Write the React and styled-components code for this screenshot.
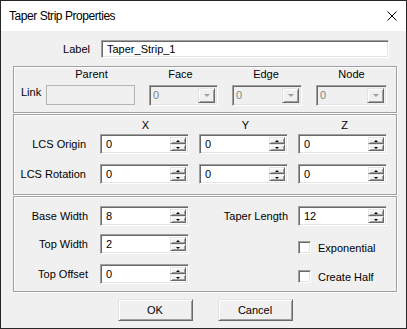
import React from 'react';
import styled, { createGlobalStyle } from 'styled-components';

const GlobalStyle = createGlobalStyle`
  html, body {
    margin: 0;
    padding: 0;
    background: #ffffff;
  }
  body {
    font-family: 'Liberation Sans', Arial, sans-serif;
    font-size: 11px;
    color: #000;
  }
`;

const Window = styled.div`
  box-sizing: border-box;
  width: 407px;
  height: 329px;
  border: 1px solid #262626;
  background: #f0f0f0;
  display: flex;
  flex-direction: column;
`;

const TitleBar = styled.div`
  flex-shrink: 0;
  height: 30px;
  background: #ffffff;
  display: flex;
  align-items: center;
  justify-content: space-between;
  padding: 0 9px 0 8px;
`;

const Title = styled.span`
  font-size: 12px;
  line-height: 14px;
  letter-spacing: -0.45px;
  color: #000;
`;

const CloseIcon = styled.svg`
  display: block;
  margin-top: -1px;
`;

const Body = styled.div`
  flex: 1;
  display: flex;
  flex-direction: column;
  padding: 9px 9px 0 12px;
`;

const LabelRow = styled.div`
  display: flex;
  align-items: center;
  height: 18px;
`;

const Caption = styled.span`
  line-height: 13px;
  white-space: nowrap;
  text-align: ${p => p.$align || 'right'};
  padding-right: ${p => p.$pr || 0}px;
  padding-left: ${p => p.$pl || 0}px;
  width: ${p => (p.$w ? `${p.$w}px` : 'auto')};
  align-self: ${p => p.$self || 'center'};
  margin-top: ${p => p.$mt || 0}px;
`;

const Group = styled.div`
  box-sizing: border-box;
  height: ${p => p.$h}px;
  margin-top: ${p => p.$mt}px;
  border: 1px solid #a0a0a0;
  box-shadow: inset 1px 1px 0 #ffffff, 1px 1px 0 #ffffff;
  display: grid;
  grid-template-columns: ${p => p.$cols};
  grid-template-rows: ${p => p.$rows};
  column-gap: ${p => p.$gap}px;
  align-content: start;
  padding-top: ${p => p.$pt}px;
`;

const Header = styled.span`
  line-height: 13px;
  text-align: center;
  white-space: nowrap;
  padding-left: ${p => Math.max(p.$shift || 0, 0) * 2}px;
  padding-right: ${p => Math.max(-(p.$shift || 0), 0) * 2}px;
  align-self: start;
`;

const sunken = `
  box-sizing: border-box;
  border: 1px solid;
  border-color: #a0a0a0 #ffffff #ffffff #a0a0a0;
  box-shadow: inset 1px 1px 0 #696969, inset -1px -1px 0 #e3e3e3;
`;

const TextField = styled.div`
  ${sunken}
  width: ${p => (p.$w ? `${p.$w}px` : '100%')};
  height: ${p => p.$h || 20}px;
  background: #ffffff;
  display: flex;
  align-items: center;
  padding-left: 5px;
  line-height: 13px;
  margin-left: ${p => p.$ml || 0}px;
`;

const DisabledField = styled.div`
  box-sizing: border-box;
  height: 20px;
  border: 1px solid #b4b4b4;
  background: #f0f0f0;
`;

const Spin = styled.div`
  ${sunken}
  height: 20px;
  background: #ffffff;
  display: flex;
  align-items: stretch;
  padding: 2px 2px 2px 5px;
  align-self: start;
`;

const SpinValue = styled.span`
  flex: 1;
  display: flex;
  align-items: center;
  line-height: 13px;
`;

const SpinButtons = styled.div`
  width: 16px;
  display: flex;
  flex-direction: column;
`;

const raised = `
  box-sizing: border-box;
  background: #f0f0f0;
  border: 1px solid;
  border-color: #e3e3e3 #696969 #696969 #e3e3e3;
  box-shadow: inset 1px 1px 0 #ffffff, inset -1px -1px 0 #a0a0a0;
`;

const SpinButton = styled.div`
  ${raised}
  flex: 1;
  display: flex;
  align-items: center;
  justify-content: center;
`;

const Arrow = styled.span`
  width: 0;
  height: 0;
  border-left: ${p => p.$size}px solid transparent;
  border-right: ${p => p.$size}px solid transparent;
  ${p => (p.$up ? 'border-bottom' : 'border-top')}: ${p => p.$size}px solid ${p => p.$color || '#000'};
`;

const Combo = styled.div`
  ${sunken}
  height: 21px;
  background: #f0f0f0;
  display: flex;
  align-items: stretch;
  padding: 2px 2px 2px 3px;
  color: #838383;
`;

const ComboValue = styled.span`
  flex: 1;
  display: flex;
  align-items: center;
  line-height: 13px;
`;

const ComboButton = styled.div`
  ${raised}
  width: 17px;
  display: flex;
  align-items: center;
  justify-content: center;
`;

const CheckRow = styled.div`
  display: flex;
  align-items: center;
  align-self: start;
  margin-top: ${p => p.$mt}px;
  gap: 7px;
  white-space: nowrap;
`;

const CheckBox = styled.span`
  ${sunken}
  width: 13px;
  height: 13px;
  background: #ffffff;
  flex-shrink: 0;
`;

const ButtonRow = styled.div`
  display: flex;
  justify-content: center;
  gap: 25px;
  margin-top: 7px;
`;

const Button = styled.button`
  box-sizing: border-box;
  width: 75px;
  height: 22px;
  font-family: 'Liberation Sans', Arial, sans-serif;
  font-size: 11px;
  color: #000;
  background: #f0f0f0;
  border: 1px solid;
  border-color: #e3e3e3 #696969 #696969 #e3e3e3;
  box-shadow: inset 1px 1px 0 #ffffff, inset -1px -1px 0 #a0a0a0;
  padding: 0;
`;

const SpinBox = ({ value }) => (
  <Spin>
    <SpinValue>{value}</SpinValue>
    <SpinButtons>
      <SpinButton><Arrow $up $size={2} /></SpinButton>
      <SpinButton><Arrow $size={2} /></SpinButton>
    </SpinButtons>
  </Spin>
);

const DisabledCombo = () => (
  <Combo>
    <ComboValue>0</ComboValue>
    <ComboButton><Arrow $size={3} $color="#a0a0a0" /></ComboButton>
  </Combo>
);

const Check = ({ label, mt }) => (
  <CheckRow $mt={mt}>
    <CheckBox />
    <span>{label}</span>
  </CheckRow>
);

const App = () => (
  <>
    <GlobalStyle />
    <Window>
      <TitleBar>
        <Title>Taper Strip Properties</Title>
        <CloseIcon width="10" height="10" viewBox="0 0 10 10">
          <path d="M0.5 0.5 L9.5 9.5 M9.5 0.5 L0.5 9.5" stroke="#000" strokeWidth="1" fill="none" />
        </CloseIcon>
      </TitleBar>
      <Body>
        <LabelRow>
          <Caption $w={77} $pr={1}>Label</Caption>
          <TextField $w={288} $h={18} $ml={10}>Taper_Strip_1</TextField>
        </LabelRow>

        <Group
          $h={47}
          $mt={8}
          $pt={1}
          $gap={14}
          $cols="18px 89px 69px 70px 71px"
          $rows="17px 21px"
        >
          <span />
          <Header $shift={1}>Parent</Header>
          <Header $shift={-3}>Face</Header>
          <Header $shift={-1}>Edge</Header>
          <Header>Node</Header>
          <Caption $align="left" $pl={7} $self="start" $mt={1}>Link</Caption>
          <DisabledField />
          <DisabledCombo />
          <DisabledCombo />
          <DisabledCombo />
        </Group>

        <Group
          $h={81}
          $mt={1}
          $pt={4}
          $gap={10}
          $cols="76px 89px 89px 89px"
          $rows="15px 30px 20px"
        >
          <span />
          <Header $shift={1}>X</Header>
          <Header $shift={2}>Y</Header>
          <Header $shift={2}>Z</Header>
          <Caption $pr={4} $self="start" $mt={4}>LCS Origin</Caption>
          <SpinBox value="0" />
          <SpinBox value="0" />
          <SpinBox value="0" />
          <Caption $pr={4} $self="start" $mt={4}>LCS Rotation</Caption>
          <SpinBox value="0" />
          <SpinBox value="0" />
          <SpinBox value="0" />
        </Group>

        <Group
          $h={96}
          $mt={1}
          $pt={9}
          $gap={10}
          $cols="76px 89px 89px 89px"
          $rows="28px 30px 20px"
        >
          <Caption $pr={2} $self="start" $mt={4}>Base Width</Caption>
          <SpinBox value="8" />
          <Caption $self="start" $mt={4}>Taper Length</Caption>
          <SpinBox value="12" />
          <Caption $pr={2} $self="start" $mt={4}>Top Width</Caption>
          <SpinBox value="2" />
          <span />
          <Check label="Exponential" mt={7} />
          <Caption $pr={2} $self="start" $mt={4}>Top Offset</Caption>
          <SpinBox value="0" />
          <span />
          <Check label="Create Half" mt={6} />
        </Group>

        <ButtonRow>
          <Button>OK</Button>
          <Button>Cancel</Button>
        </ButtonRow>
      </Body>
    </Window>
  </>
);

export default App;
